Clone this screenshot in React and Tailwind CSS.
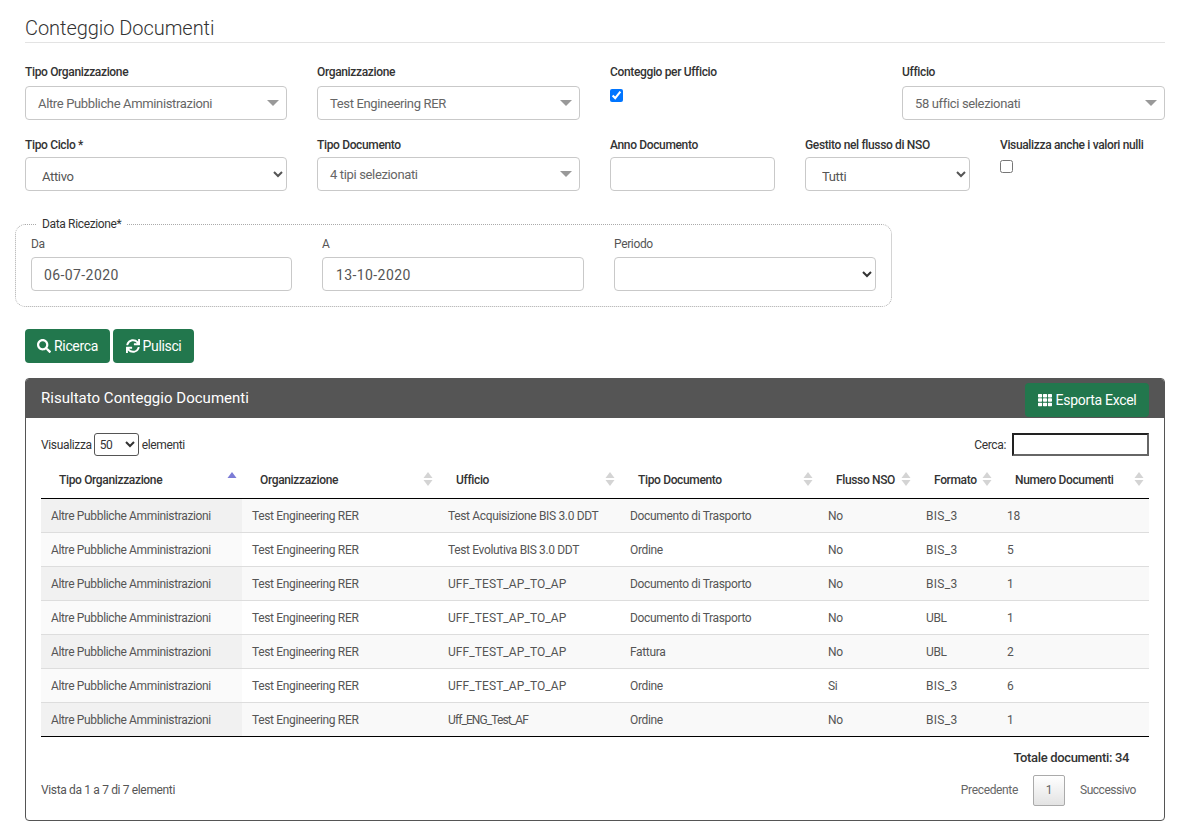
import { FaSearch, FaSync, FaTh } from 'react-icons/fa'

const rows = [
  ['Test Acquisizione BIS 3.0 DDT', 'Documento di Trasporto', 'No', 'BIS_3', '18'],
  ['Test Evolutiva BIS 3.0 DDT', 'Ordine', 'No', 'BIS_3', '5'],
  ['UFF_TEST_AP_TO_AP', 'Documento di Trasporto', 'No', 'BIS_3', '1'],
  ['UFF_TEST_AP_TO_AP', 'Documento di Trasporto', 'No', 'UBL', '1'],
  ['UFF_TEST_AP_TO_AP', 'Fattura', 'No', 'UBL', '2'],
  ['UFF_TEST_AP_TO_AP', 'Ordine', 'Si', 'BIS_3', '6'],
  ['Uff_ENG_Test_AF', 'Ordine', 'No', 'BIS_3', '1'],
]

const headers = [
  ['Tipo Organizzazione', 'w-[201px]'],
  ['Organizzazione', 'w-[196px]'],
  ['Ufficio', 'w-[182px]'],
  ['Tipo Documento', 'w-[198px]'],
  ['Flusso NSO', 'w-[98px]'],
  ['Formato', 'w-[81px]'],
  ['Numero Documenti', 'w-[152px]'],
]

// the underscore names run wider or narrower than the rest of the text
function cellClass(c) {
  if (c === 'UFF_TEST_AP_TO_AP') return 'pl-[10px] tracking-[0.08px]'
  if (c === 'Uff_ENG_Test_AF') return 'pl-[10px] tracking-[-0.9px]'
  if (c === 'BIS_3') return 'pl-[10px] tracking-[0.3px]'
  return 'pl-[10px]'
}

function FakeSelect({ text }) {
  return (
    <div className="flex items-center justify-between h-[34px] border border-[#c9c9c9] rounded-[4px] pl-[12px] pr-[7px] text-[13px] text-[#666]">
      <span className="pt-[2px]">{text}</span>
      <span className="w-0 h-0 border-x-[6px] border-x-transparent border-t-[6px] border-t-[#999]"></span>
    </div>
  )
}

function Sort({ active }) {
  return (
    <svg width="10" height="16" viewBox="0 0 10 16" className="shrink-0">
      <path d="M5 1 L9.5 7 H0.5 Z" fill={active ? '#7b7bd6' : '#d4d4d4'} />
      {!active && <path d="M5 15 L9.5 9 H0.5 Z" fill="#d4d4d4" />}
    </svg>
  )
}

export default function App() {
  return (
    <div className="bg-white w-[1191px] h-[833px] overflow-hidden pl-[25px] pr-[26px] pt-[15px] font-['Roboto',sans-serif] text-[12px] text-[#333] tracking-[-0.35px]">
      <div className="text-[20px] leading-[27px] font-light text-[#333] border-b border-[#e3e3e3] tracking-[-0.05px]">Conteggio Documenti</div>

      <div className="flex gap-[30px] mt-[20px]">
        <div className="w-[262px]">
          <div className="h-[23px] font-medium">Tipo Organizzazione</div>
          <FakeSelect text="Altre Pubbliche Amministrazioni" />
        </div>
        <div className="w-[263px]">
          <div className="h-[23px] font-medium">Organizzazione</div>
          <FakeSelect text="Test Engineering RER" />
        </div>
        <div className="w-[262px]">
          <div className="h-[23px] font-medium">Conteggio per Ufficio</div>
          <input type="checkbox" defaultChecked className="block w-[13px] h-[13px] mt-[3px] accent-[#0075ff]" />
        </div>
        <div className="w-[263px]">
          <div className="h-[23px] font-medium">Ufficio</div>
          <FakeSelect text="58 uffici selezionati" />
        </div>
      </div>

      <div className="flex mt-[16px]">
        <div className="w-[262px] mr-[30px]">
          <div className="h-[21px] font-medium">Tipo Ciclo *</div>
          <select className="block w-full h-[34px] border border-[#c9c9c9] rounded-[4px] pl-[12px] pt-[4px] text-[13px] text-[#555] bg-white">
            <option>Attivo</option>
          </select>
        </div>
        <div className="w-[263px] mr-[30px]">
          <div className="h-[21px] font-medium">Tipo Documento</div>
          <FakeSelect text="4 tipi selezionati" />
        </div>
        <div className="w-[165px] mr-[30px]">
          <div className="h-[21px] font-medium">Anno Documento</div>
          <input className="block w-full h-[34px] border border-[#c9c9c9] rounded-[4px]" />
        </div>
        <div className="w-[165px] mr-[30px]">
          <div className="h-[21px] font-medium">Gestito nel flusso di NSO</div>
          <select className="block w-full h-[34px] border border-[#c9c9c9] rounded-[4px] pl-[12px] pt-[4px] text-[13px] text-[#555] bg-white">
            <option>Tutti</option>
          </select>
        </div>
        <div>
          <div className="h-[21px] font-medium">Visualizza anche i valori nulli</div>
          <input type="checkbox" className="block w-[13px] h-[13px] mt-[3px]" />
        </div>
      </div>

      <fieldset className="ml-[-10px] mt-[26px] w-[877px] h-[90px] border border-dotted border-[#aaa] rounded-[10px] px-[15px]">
        <legend className="ml-[5px] px-[6px] text-[12px] leading-[14px]">Data Ricezione*</legend>
        <div className="flex gap-[30px] mt-[4px]">
          <div className="w-[261px]">
            <div className="h-[22px] text-[#555]">Da</div>
            <input readOnly value="06-07-2020" className="block w-full h-[34px] border border-[#c9c9c9] rounded-[4px] pl-[12px] pt-[2px] text-[14px] text-[#555] tracking-[0.4px]" />
          </div>
          <div className="w-[262px]">
            <div className="h-[22px] text-[#555]">A</div>
            <input readOnly value="13-10-2020" className="block w-full h-[34px] border border-[#c9c9c9] rounded-[4px] pl-[13px] pt-[2px] text-[14px] text-[#555] tracking-[0.4px]" />
          </div>
          <div className="w-[262px]">
            <div className="h-[22px] text-[#555]">Periodo</div>
            <select className="block w-full h-[34px] border border-[#c9c9c9] rounded-[4px] bg-white"></select>
          </div>
        </div>
      </fieldset>

      <div className="flex gap-[3px] mt-[22px] text-white text-[14px]">
        <button className="flex items-center gap-[3px] w-[85px] justify-center h-[34px] bg-[#22774d] rounded-[4px]">
          <FaSearch size={14} />Ricerca
        </button>
        <button className="flex items-center gap-[3px] w-[81px] justify-center h-[34px] bg-[#22774d] rounded-[4px]">
          <FaSync size={14} />Pulisci
        </button>
      </div>

      <div className="mt-[15px] w-[1140px] h-[443px] border border-[#555] rounded-[4px] overflow-hidden">
        <div className="flex items-center justify-between h-[39px] bg-[#555] px-[15px]">
          <span className="text-[15px] text-white tracking-[0.02px]">Risultato Conteggio Documenti</span>
          <button className="flex items-center justify-center gap-[4px] w-[124px] h-[34px] mt-[3px] bg-[#22774d] rounded-[4px] text-[14px] text-white tracking-[-0.3px]">
            <FaTh size={14} />Esporta Excel
          </button>
        </div>

        <div className="px-[15px]">
          <div className="flex items-center justify-between mt-[15px] h-[23px]">
            <div className="flex items-center gap-[2px]">
              Visualizza
              <select className="w-[45px] h-[23px] border border-[#555] rounded-[3px] bg-white pl-[1px] text-[12px]">
                <option>50</option>
              </select>
              <span className="ml-[1px]">elementi</span>
            </div>
            <div className="flex items-center gap-[6px]">
              Cerca:
              <input className="w-[137px] h-[23px] border-2 border-t-[#222] border-l-[#222] border-r-[#666] border-b-[#666]" />
            </div>
          </div>

          <table className="w-[1108px] mt-[5px] table-fixed border-collapse">
            <thead>
              <tr className="h-[37px] border-b border-black">
                {headers.map(([h, w], i) => (
                  <th key={h} className={`${w} font-medium text-left pl-[18px] pr-[5px]`}>
                    <div className="flex items-center justify-between">
                      <span className="pt-[2px]">{h}</span>
                      <Sort active={i === 0} />
                    </div>
                  </th>
                ))}
              </tr>
            </thead>
            <tbody className="text-[#555]">
              {rows.map((r, i) => (
                <tr key={i} className={`h-[34px] border-b ${i === 6 ? 'border-black' : 'border-[#ddd]'} ${i % 2 === 0 ? 'bg-[#f9f9f9]' : 'bg-white'}`}>
                  <td className={`pl-[10px] pt-[2px] ${i % 2 === 0 ? 'bg-[#f1f1f1]' : 'bg-[#fafafa]'}`}>Altre Pubbliche Amministrazioni</td>
                  <td className="pl-[10px] pt-[2px]">Test Engineering RER</td>
                  {r.map((c, j) => (
                    <td key={j} className={`${cellClass(c)} pt-[2px]`}>{c}</td>
                  ))}
                </tr>
              ))}
            </tbody>
          </table>

          <div className="flex justify-end pr-[20px] mt-[13px] h-[16px] leading-[16px] font-medium text-[13px] tracking-[-0.35px]">Totale documenti: 34</div>

          <div className="flex items-center justify-between mt-[9px]">
            <span className="text-[#555]">Vista da 1 a 7 di 7 elementi</span>
            <div className="flex items-center text-[#666] pr-[13px]">
              <span>Precedente</span>
              <span className="flex items-center justify-center w-[32px] h-[31px] mx-[15px] border border-[#aaa] rounded-[2px] bg-gradient-to-b from-white to-[#e3e3e3]">1</span>
              <span className="tracking-[-0.45px]">Successivo</span>
            </div>
          </div>
        </div>
      </div>
    </div>
  )
}
